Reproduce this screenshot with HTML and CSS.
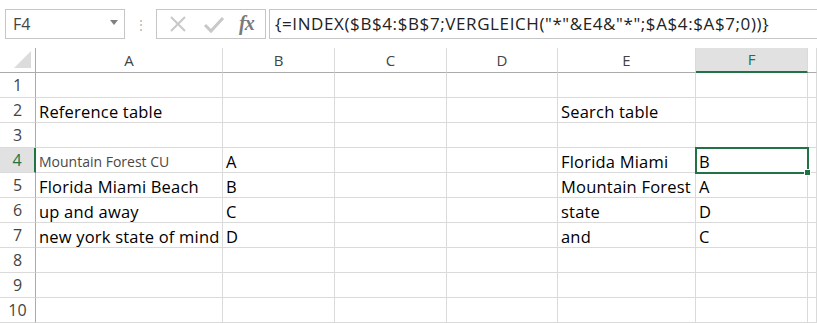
FILE: index.html
```html
<!DOCTYPE html>
<html lang="en">
<head>
    <meta charset="UTF-8">
    <title>Sheet</title>
    <link rel="stylesheet" href="styles.css">
</head>
<body>
    <div class="toolbar">
        <div class="namebox">
            <span>F4</span>
            <svg class="arrow" width="8" height="5" viewBox="0 0 8 5"><path d="M0 0h8L4 5z" fill="#808080"/></svg>
        </div>
        <div class="grip">⋮</div>
        <div class="fbuttons">
            <svg width="20" height="20" viewBox="0 0 20 20"><path d="M3 3L17 17M17 3L3 17" stroke="#c8c8c8" stroke-width="2"/></svg>
            <svg width="22" height="20" viewBox="0 0 22 20"><path d="M2 11L8 17L20 4" stroke="#c8c8c8" stroke-width="3" fill="none"/></svg>
            <span class="fx">fx</span>
        </div>
        <div class="formula">{=INDEX($B$4:$B$7;VERGLEICH("*"&amp;E4&amp;"*";$A$4:$A$7;0))}</div>
    </div>

    <div class="sheet">
        <div class="corner"><span class="tri"></span></div>
        <div class="colhead">A</div>
        <div class="colhead">B</div>
        <div class="colhead">C</div>
        <div class="colhead">D</div>
        <div class="colhead">E</div>
        <div class="colhead active">F</div>
        <div class="colhead"></div>

        <div class="rowhead">1</div>
        <div class="cell"></div><div class="cell"></div><div class="cell"></div><div class="cell"></div><div class="cell"></div><div class="cell"></div><div class="cell"></div>

        <div class="rowhead">2</div>
        <div class="cell">Reference table</div><div class="cell"></div><div class="cell"></div><div class="cell"></div><div class="cell">Search table</div><div class="cell"></div><div class="cell"></div>

        <div class="rowhead">3</div>
        <div class="cell"></div><div class="cell"></div><div class="cell"></div><div class="cell"></div><div class="cell"></div><div class="cell"></div><div class="cell"></div>

        <div class="rowhead active">4</div>
        <div class="cell light">Mountain Forest CU</div><div class="cell">A</div><div class="cell"></div><div class="cell"></div><div class="cell">Florida Miami</div><div class="cell selected">B<span class="handle"></span></div><div class="cell"></div>

        <div class="rowhead">5</div>
        <div class="cell">Florida Miami Beach</div><div class="cell">B</div><div class="cell"></div><div class="cell"></div><div class="cell">Mountain Forest</div><div class="cell">A</div><div class="cell"></div>

        <div class="rowhead">6</div>
        <div class="cell">up and away</div><div class="cell">C</div><div class="cell"></div><div class="cell"></div><div class="cell">state</div><div class="cell">D</div><div class="cell"></div>

        <div class="rowhead">7</div>
        <div class="cell">new york state of mind</div><div class="cell">D</div><div class="cell"></div><div class="cell"></div><div class="cell">and</div><div class="cell">C</div><div class="cell"></div>

        <div class="rowhead">8</div>
        <div class="cell"></div><div class="cell"></div><div class="cell"></div><div class="cell"></div><div class="cell"></div><div class="cell"></div><div class="cell"></div>

        <div class="rowhead">9</div>
        <div class="cell"></div><div class="cell"></div><div class="cell"></div><div class="cell"></div><div class="cell"></div><div class="cell"></div><div class="cell"></div>

        <div class="rowhead">10</div>
        <div class="cell"></div><div class="cell"></div><div class="cell"></div><div class="cell"></div><div class="cell"></div><div class="cell"></div><div class="cell"></div>
    </div>
</body>
</html>
```

FILE: styles.css
```css
body {
    margin: 0;
    background: #ffffff;
    font-family: "Open Sans", sans-serif;
    overflow: hidden;
}

.toolbar {
    display: flex;
    align-items: center;
    height: 48px;
    padding-left: 5px;
    box-sizing: border-box;
}
.namebox {
    width: 120px;
    height: 30px;
    box-sizing: border-box;
    border: 1px solid #c6c6c6;
    display: flex;
    align-items: center;
    justify-content: space-between;
    padding: 0 6px 0 7px;
    font-size: 16px;
    color: #444444;
    margin-top: -1px;
}
.arrow {
    margin-top: -2px;
}
.grip {
    width: 31px;
    text-align: center;
    color: #b8b8b8;
    font-size: 14px;
}
.fbuttons {
    width: 110px;
    height: 30px;
    box-sizing: border-box;
    border: 1px solid #c6c6c6;
    display: flex;
    align-items: center;
    justify-content: space-around;
    padding: 0 4px;
    margin-top: -1px;
}
.fx {
    font-family: "Liberation Serif", serif;
    font-style: italic;
    font-weight: bold;
    font-size: 20px;
    color: #7a7a7a;
    letter-spacing: -1px;
}
.formula {
    flex: 1;
    height: 30px;
    box-sizing: border-box;
    border: 1px solid #c6c6c6;
    border-right: none;
    margin-left: 3px;
    margin-top: -1px;
    padding-left: 5px;
    line-height: 28px;
    font-size: 17px;
    letter-spacing: 0.6px;
    color: #222222;
    white-space: nowrap;
}

.sheet {
    display: grid;
    grid-template-columns: 36px 187px 112px 112px 111px 138px 112px 9px;
    grid-template-rows: 25px repeat(10, 25px);
}
.corner {
    background: #ffffff;
    border-right: 1px solid #ababab;
    border-bottom: 1px solid #ababab;
    position: relative;
}
.tri {
    position: absolute;
    right: 4px;
    bottom: 4px;
    width: 0;
    height: 0;
    border-left: 17px solid transparent;
    border-bottom: 17px solid #dcdcdc;
}
.colhead {
    background: #ffffff;
    border-right: 1px solid #dadada;
    border-bottom: 1px solid #ababab;
    text-align: center;
    font-size: 15px;
    line-height: 24px;
    color: #444444;
}
.colhead.active {
    background: #e1e1e1;
    color: #217346;
    border-bottom: 2px solid #217346;
    line-height: 23px;
}
.rowhead {
    border-right: 1px solid #ababab;
    border-bottom: 1px solid #dadada;
    text-align: center;
    font-size: 16px;
    line-height: 24px;
    color: #444444;
}
.rowhead.active {
    background: #e1e1e1;
    color: #217346;
    border-right: 2px solid #217346;
}
.cell {
    border-right: 1px solid #dadada;
    border-bottom: 1px solid #dadada;
    font-size: 16.5px;
    letter-spacing: 0.2px;
    line-height: 27px;
    padding-left: 3px;
    color: #000000;
    white-space: nowrap;
    overflow: visible;
    position: relative;
}
.cell.light {
    color: #484848;
    font-size: 14px;
    letter-spacing: 0;
}
.cell.selected {
    outline: 2px solid #217346;
    outline-offset: -1px;
    z-index: 1;
}
.handle {
    position: absolute;
    right: -4px;
    bottom: -4px;
    width: 5px;
    height: 5px;
    background: #217346;
    border: 1px solid #ffffff;
}
```
